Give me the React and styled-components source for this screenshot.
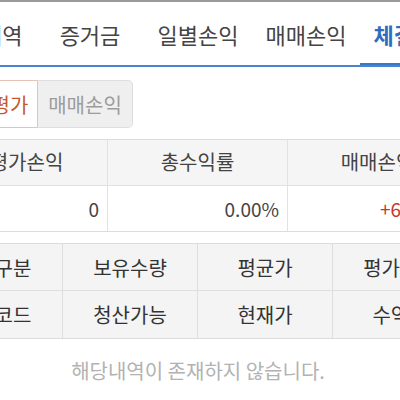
import styled, { createGlobalStyle } from 'styled-components';

const GlobalStyle = createGlobalStyle`
  html, body {
    margin: 0;
    padding: 0;
    background: #ffffff;
    overflow: hidden;
  }
  body {
    font-family: "Noto Sans CJK KR", "Noto Sans", sans-serif;
  }
`

const tabs = ['거래내역', '증거금', '일별손익', '매매손익', '체결잔고']

const summaryHead = ['평가손익', '총수익률', '매매손익']
const summaryData = [
  { value: '0' },
  { value: '0.00%' },
  { value: '+650,000', up: true },
]

const holdRows = [
  ['구분', '보유수량', '평균가', '평가손익'],
  ['코드', '청산가능', '현재가', '수익률'],
]

export default function App() {
  return (
    <>
      <GlobalStyle />
      <Page>
        <TabBar>
          {tabs.map((t, i) => (
            <Tab key={t} active={i === tabs.length - 1}>{t}</Tab>
          ))}
        </TabBar>

        <SubTabs>
          <SubButton active>평가</SubButton>
          <SubButton>매매손익</SubButton>
        </SubTabs>

        <SummaryTable>
          {summaryHead.map((h) => (
            <HeadCell key={h}>{h}</HeadCell>
          ))}
          {summaryData.map((d, i) => (
            <ValueCell key={i} up={d.up}>{d.value}</ValueCell>
          ))}
        </SummaryTable>

        <HoldTable>
          {holdRows.flat().map((h, i) => (
            <HoldCell key={i}>{h}</HoldCell>
          ))}
        </HoldTable>

        <Empty>해당내역이 존재하지 않습니다.</Empty>
      </Page>
    </>
  )
}

const Page = styled.div`
    width: 540px;
    margin-left: -72px;
    border-top: 2px solid #9a9a9a;
`
const TabBar = styled.div`
    display: grid;
    grid-template-columns: repeat(5, 108px);
    height: 63px;
    border-bottom: 2px solid #4a84cc;
`
const Tab = styled.div`
    display: flex;
    align-items: center;
    justify-content: center;
    font-size: 22px;
    color: ${props => props.active ? '#2f6cbf' : '#444444'};
    font-weight: ${props => props.active ? 700 : 400};
    box-shadow: ${props => props.active ? 'inset 0 -2px 0 #3a78c8' : 'none'};
`
const SubTabs = styled.div`
    display: flex;
    margin: 13px 0 11px 54px;
`
const SubButton = styled.div`
    height: 48px;
    display: flex;
    align-items: center;
    justify-content: center;
    box-sizing: border-box;
    font-size: 20px;
    width: ${props => props.active ? '56px' : '95px'};
    background: ${props => props.active ? '#ffffff' : '#efefef'};
    color: ${props => props.active ? '#c4592e' : '#9c9c9c'};
    border: 1px solid ${props => props.active ? '#e6c2b3' : '#dedede'};
    border-radius: ${props => props.active ? '4px 0 0 4px' : '0 5px 5px 0'};
    border-left: ${props => props.active ? '1px solid #e6c2b3' : 'none'};
`
const SummaryTable = styled.div`
    display: grid;
    grid-template-columns: repeat(3, 1fr);
    grid-template-rows: 46px 45px;
    border-top: 1px solid #dcdcdc;
    border-bottom: 1px solid #dcdcdc;
`
const HeadCell = styled.div`
    display: flex;
    align-items: center;
    justify-content: center;
    background: #f5f5f5;
    color: #444444;
    font-size: 20px;
    border-right: 1px solid #e2e2e2;
    border-bottom: 1px solid #e2e2e2;
    padding-bottom: 2px;
    &:first-child {
        padding-left: 18px;
    }
`
const ValueCell = styled.div`
    display: flex;
    align-items: center;
    justify-content: flex-end;
    padding-right: 8px;
    color: ${props => props.up ? '#c8372d' : '#444444'};
    font-size: 19px;
    border-right: 1px solid #e2e2e2;
`
const HoldTable = styled.div`
    display: grid;
    grid-template-columns: repeat(4, 1fr);
    grid-template-rows: 47px 47px;
    margin-top: 11px;
    background: #f4f4f4;
    border-top: 1px solid #dcdcdc;
    border-bottom: 1px solid #dcdcdc;
`
const HoldCell = styled.div`
    display: flex;
    align-items: center;
    justify-content: center;
    color: #333333;
    font-size: 20px;
    border-right: 1px solid #dedede;
    &:nth-child(-n+4) {
        border-bottom: 1px solid #dedede;
    }
    &:nth-child(4n+1) {
        padding-left: 36px;
    }
`
const Empty = styled.div`
    text-align: center;
    padding-top: 17px;
    font-size: 20px;
    color: #b2b2b2;
`
